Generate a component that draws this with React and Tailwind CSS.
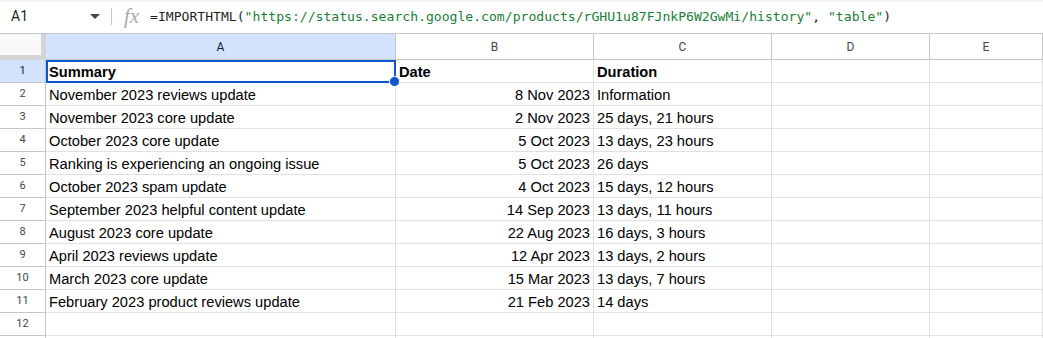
const rows = [
  ['Summary', 'Date', 'Duration'],
  ['November 2023 reviews update', '8 Nov 2023', 'Information'],
  ['November 2023 core update', '2 Nov 2023', '25 days, 21 hours'],
  ['October 2023 core update', '5 Oct 2023', '13 days, 23 hours'],
  ['Ranking is experiencing an ongoing issue', '5 Oct 2023', '26 days'],
  ['October 2023 spam update', '4 Oct 2023', '15 days, 12 hours'],
  ['September 2023 helpful content update', '14 Sep 2023', '13 days, 11 hours'],
  ['August 2023 core update', '22 Aug 2023', '16 days, 3 hours'],
  ['April 2023 reviews update', '12 Apr 2023', '13 days, 2 hours'],
  ['March 2023 core update', '15 Mar 2023', '13 days, 7 hours'],
  ['February 2023 product reviews update', '21 Feb 2023', '14 days'],
  ['', '', ''],
  ['', '', ''],
]

const cols = ['A', 'B', 'C', 'D', 'E']

function FormulaBar() {
  return (
    <div className="h-[34px] border-b border-[#c4c7c5] bg-white flex items-center relative">
      <div className="absolute top-0 left-0 right-0 h-[2px] bg-[#f3f5f7]" />
      <div className="w-[111px] flex items-center pl-[11px] pr-[11px] justify-between">
        <span className="text-[14px] text-[#1f1f1f] font-['Roboto',sans-serif]">A1</span>
        <svg width="10" height="5" viewBox="0 0 10 5">
          <path d="M0 0 L10 0 L5 5 Z" fill="#444746" />
        </svg>
      </div>
      <div className="w-px h-[17px] bg-[#c4c7c5]" />
      <span className="ml-[12px] w-[26px] text-[21px] leading-none italic text-[#a8abae] font-['Liberation_Serif',serif]">fx</span>
      <span className="text-[13.1px] whitespace-nowrap text-[#1f1f1f] font-['DejaVu_Sans_Mono',monospace]">
        =IMPORTHTML(<span className="text-[#188038]">"https://status.search.google.com/products/rGHU1u87FJnkP6W2GwMi/history"</span>, <span className="text-[#188038]">"table"</span>)
      </span>
    </div>
  )
}

export default function App() {
  return (
    <div className="w-[1043px] h-[338px] overflow-hidden bg-white">
      <FormulaBar />
      <div className="grid grid-cols-[46px_350px_198px_178px_158px_113px] font-['Liberation_Sans',Arial,sans-serif]">
        <div className="h-[26px] bg-[#f8f9fa] border-r-[5px] border-b-[5px] border-[#d3d4d6]" />
        {cols.map((c) => (
          <div
            key={c}
            className={`h-[26px] border-r border-b border-[#c4c7c5] flex items-center justify-center text-[12px] font-['Roboto',sans-serif] ${
              c === 'A' ? 'bg-[#d3e3fd] text-[#041e49]' : 'bg-white text-[#444746]'
            }`}
          >
            {c}
          </div>
        ))}
        {rows.map((r, i) => (
          <Row key={i} n={i + 1} cells={r} />
        ))}
      </div>
    </div>
  )
}

function Row({ n, cells }) {
  const bold = n === 1
  return (
    <>
      <div
        className={`h-[23px] border-r border-b border-[#c4c7c5] flex items-center justify-center text-[11px] font-['Roboto',sans-serif] ${
          n === 1 ? 'bg-[#d3e3fd] text-[#041e49]' : 'bg-white text-[#444746]'
        }`}
      >
        {n < 13 ? n : ''}
      </div>
      <div className="relative h-[23px] border-r border-b border-[#e1e1e1] flex items-end pb-[1px] pl-[3px] text-[14.67px] leading-[17px] text-black whitespace-nowrap">
        <span className={bold ? 'font-bold' : ''}>{cells[0]}</span>
        {n === 1 && (
          <div className="absolute top-0 left-0 -right-px -bottom-px border-2 border-[#0b57d0] z-10">
            <div className="absolute -right-[6px] -bottom-[6px] w-[9px] h-[9px] rounded-full bg-[#0b57d0] border border-white box-content" />
          </div>
        )}
      </div>
      <div
        className={`h-[23px] border-r border-b border-[#e1e1e1] flex items-end pb-[1px] text-[14.67px] leading-[17px] text-black whitespace-nowrap ${
          bold ? 'justify-start pl-[3px] font-bold' : 'justify-end pr-[3px]'
        }`}
      >
        {cells[1]}
      </div>
      <div
        className={`h-[23px] border-r border-b border-[#e1e1e1] flex items-end pb-[1px] pl-[3px] text-[14.67px] leading-[17px] text-black whitespace-nowrap ${
          bold ? 'font-bold' : ''
        }`}
      >
        {cells[2]}
      </div>
      <div className="h-[23px] border-r border-b border-[#e1e1e1]" />
      <div className="h-[23px] border-r border-b border-[#e1e1e1]" />
    </>
  )
}
